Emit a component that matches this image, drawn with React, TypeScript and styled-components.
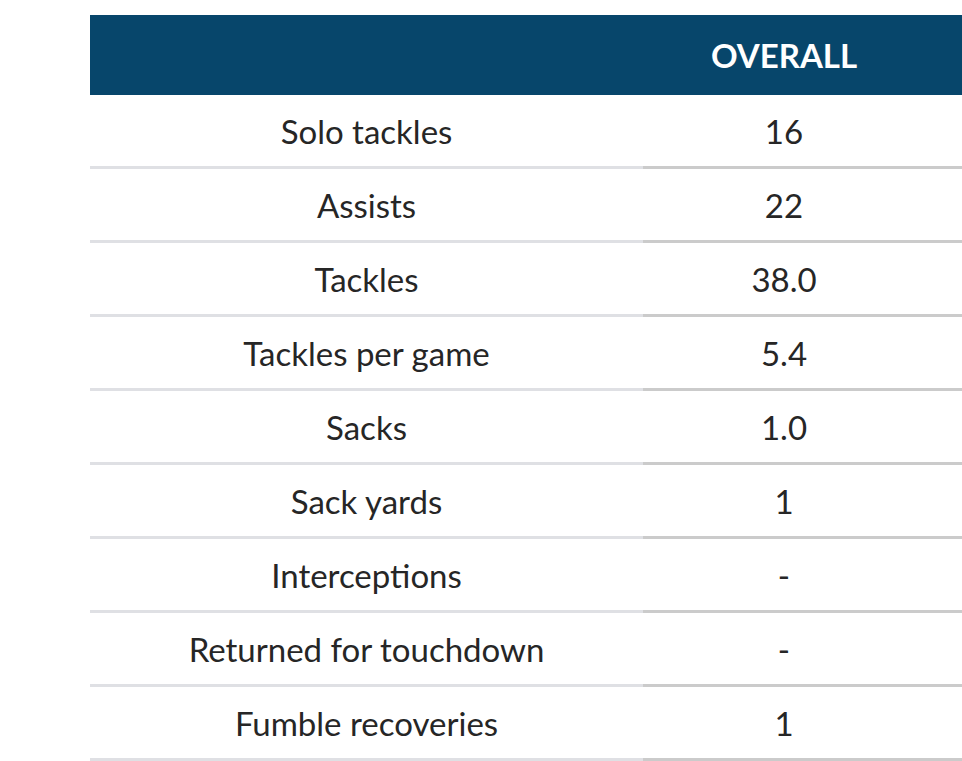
import React from "react";
import styled, { createGlobalStyle } from "styled-components";

const GlobalStyle = createGlobalStyle`
    html, body {
        margin: 0;
        padding: 0;
        background: #ffffff;
        overflow: hidden;
    }
    body {
        font-family: Lato, "Open Sans", "Liberation Sans", sans-serif;
    }
`;

const Page = styled.div`
    width: 962px;
    height: 761px;
    padding: 15px 0 0 90px;
    box-sizing: border-box;
    overflow: hidden;
`;

const Table = styled.table`
    width: 912px;
    border-collapse: collapse;
    table-layout: fixed;
    color: #262626;
`;

const HeadRow = styled.tr`
    height: 80px;
    background: #07466b;
`;

const HeadCell = styled.th`
    padding: 0 77px 0 0;
    color: #ffffff;
    font-size: 33px;
    font-weight: 700;
    text-align: center;
`;

const BlankHead = styled.th`
    width: 553px;
    padding: 0;
`;

const LabelCell = styled.td`
    padding: 0;
    height: 71px;
    font-size: 33px;
    font-weight: 400;
    text-align: center;
    border-bottom: 3px solid #dfe0e4;
`;

const ValueCell = styled.td`
    padding: 0 77px 0 0;
    height: 71px;
    font-size: 33px;
    font-weight: 400;
    text-align: center;
    border-bottom: 3px solid #cbcbcb;
`;

const stats: [string, string][] = [
    ["Solo tackles", "16"],
    ["Assists", "22"],
    ["Tackles", "38.0"],
    ["Tackles per game", "5.4"],
    ["Sacks", "1.0"],
    ["Sack yards", "1"],
    ["Interceptions", "-"],
    ["Returned for touchdown", "-"],
    ["Fumble recoveries", "1"],
];

const App = () => {
    return (
        <Page>
            <GlobalStyle />
            <Table>
                <thead>
                    <HeadRow>
                        <BlankHead />
                        <HeadCell>OVERALL</HeadCell>
                    </HeadRow>
                </thead>
                <tbody>
                    {stats.map(([label, value]) => (
                        <tr key={label}>
                            <LabelCell>{label}</LabelCell>
                            <ValueCell>{value}</ValueCell>
                        </tr>
                    ))}
                </tbody>
            </Table>
        </Page>
    );
};

export default App;
